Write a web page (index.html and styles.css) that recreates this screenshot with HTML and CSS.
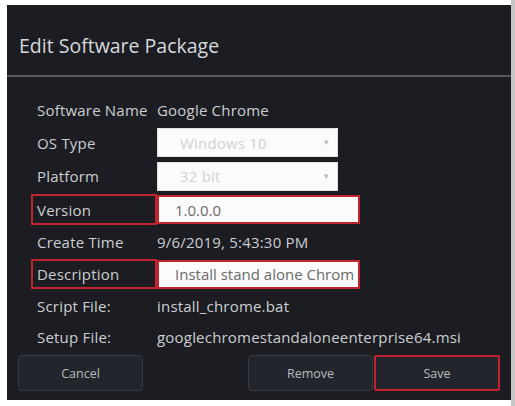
FILE: index.html
```html
<!DOCTYPE html>
<html lang="en">
<head>
<meta charset="utf-8">
<title>Edit Software Package</title>
<link rel="stylesheet" href="styles.css">
</head>
<body>
<div class="frame">
  <div class="dialog">
    <div class="dialog-header">
      <h1 class="dialog-title">Edit Software Package</h1>
    </div>
    <div class="dialog-body">
      <div class="form">
        <div class="label">Software Name</div>
        <div class="value">Google Chrome</div>

        <div class="label">OS Type</div>
        <div class="value"><div class="select">Windows 10<span class="caret">&#9662;</span></div></div>

        <div class="label">Platform</div>
        <div class="value"><div class="select">32 bit<span class="caret">&#9662;</span></div></div>

        <div class="label marked">Version</div>
        <div class="value"><div class="input marked">1.0.0.0</div></div>

        <div class="label">Create Time</div>
        <div class="value">9/6/2019, 5:43:30 PM</div>

        <div class="label marked">Description</div>
        <div class="value"><div class="input marked">Install stand alone Chrom</div></div>

        <div class="label">Script File:</div>
        <div class="value">install_chrome.bat</div>

        <div class="label">Setup File:</div>
        <div class="value">googlechromestandaloneenterprise64.msi</div>
      </div>
      <div class="actions">
        <button class="btn">Cancel</button>
        <div class="actions-right">
          <button class="btn">Remove</button>
          <button class="btn marked">Save</button>
        </div>
      </div>
    </div>
  </div>
</div>
</body>
</html>
```

FILE: styles.css
```css
html, body {
  margin: 0;
  padding: 0;
  background: #ffffff;
}

body {
  width: 515px;
  height: 406px;
  overflow: hidden;
  font-family: "Open Sans", "Noto Sans", sans-serif;
}

.frame {
  box-sizing: border-box;
  width: 515px;
  height: 406px;
  padding: 5px 0 0 7px;
  border-right: 4px solid #c4c5c7;
}

.dialog {
  width: 504px;
  height: 395px;
  background: #1b1d22;
  display: flex;
  flex-direction: column;
}

.dialog-header {
  box-sizing: border-box;
  height: 72px;
  padding: 0 0 17px 12px;
  display: flex;
  align-items: flex-end;
  border-bottom: 2px solid #55585d;
}

.dialog-title {
  margin: 0;
  font-size: 19.5px;
  font-weight: 400;
  line-height: 24px;
  color: #d8d9da;
}

.dialog-body {
  flex: 1;
  padding: 17px 11px 9px 11px;
  display: flex;
  flex-direction: column;
}

.form {
  display: grid;
  grid-template-columns: 126px 1fr;
  grid-template-rows: 32px 33px 34px 33px 32px 32px 32px 30px;
  margin-left: 13px;
  font-size: 15px;
  letter-spacing: 0.2px;
  color: #cdced0;
}

.label {
  box-sizing: border-box;
  display: flex;
  align-items: center;
  padding-left: 4px;
  border: 2px solid transparent;
  margin: 1px 0;
  white-space: nowrap;
}

.value {
  display: flex;
  align-items: center;
  white-space: nowrap;
}

.label.marked {
  border-color: #c2232e;
}

.select {
  box-sizing: border-box;
  position: relative;
  width: 181px;
  height: 29px;
  background: #fbfbfb;
  border: 1px solid #e2e2e2;
  color: #d2d2d2;
  padding-left: 22px;
  display: flex;
  align-items: center;
}

.caret {
  position: absolute;
  right: 8px;
  top: 6px;
  font-size: 9px;
  color: #b8b8b8;
}

.input {
  box-sizing: border-box;
  width: 203px;
  height: 29px;
  background: #fbfbfb;
  color: #6a6a6a;
  padding-left: 16px;
  display: flex;
  align-items: center;
  white-space: nowrap;
  overflow: hidden;
  letter-spacing: 0;
}

.input.marked {
  border: 2px solid #c2232e;
}

.actions {
  margin-top: 3px;
  display: flex;
  justify-content: space-between;
}

.actions-right {
  display: flex;
  gap: 1px;
}

.btn {
  box-sizing: border-box;
  width: 125px;
  height: 36px;
  background: #22262c;
  border: 1px solid #383c42;
  border-radius: 4px;
  color: #b9babc;
  font-family: "Open Sans", "Noto Sans", sans-serif;
  font-size: 12.5px;
  padding: 0;
}

.btn.marked {
  width: 126px;
  border: 2px solid #c2232e;
  border-radius: 2px;
}
```
